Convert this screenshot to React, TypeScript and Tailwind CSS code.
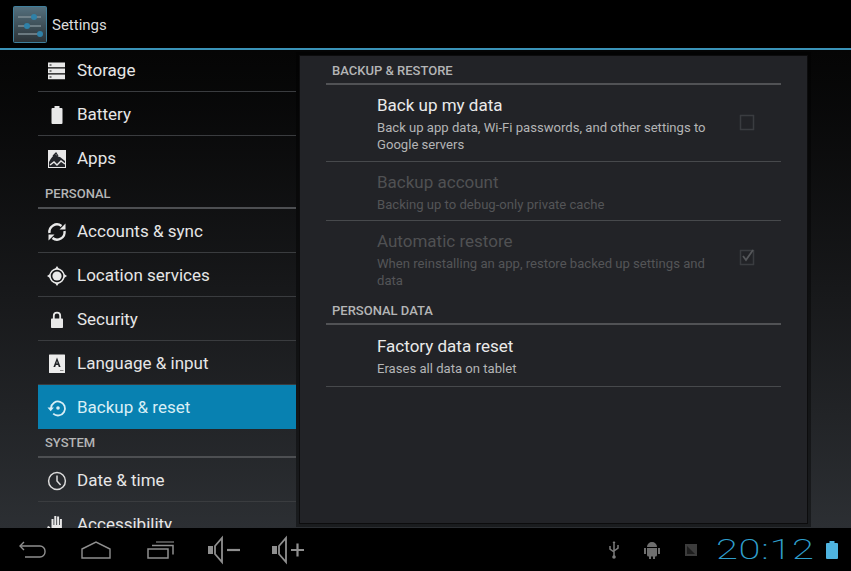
import type { ReactNode } from "react";

const icon = "h-[22px] w-[22px] shrink-0 text-[#e8e8e8]";

const StorageIcon = () => (
  <svg viewBox="0 0 22 22" className={icon} fill="currentColor">
    <path fillRule="evenodd" d="M2 2.500h17v4.800H2zM3.500 4.400v1h2v-1zM2 8.500h17v4.800H2zM3.500 10.400v1h2v-1zM2 14.500h17v4.800H2zM3.500 16.400v1h2v-1z" />
  </svg>
);
const BatteryIcon = () => (
  <svg viewBox="0 0 22 22" className={icon} fill="currentColor">
    <path d="M8.500 2h5v2h2a1 1 0 0 1 1 1v14a1 1 0 0 1-1 1h-9a1 1 0 0 1-1-1V5a1 1 0 0 1 1-1h2z" />
  </svg>
);
const AppsIcon = () => (
  <svg viewBox="0 0 22 22" className={icon}>
    <rect x="2" y="2" width="18" height="18" fill="#e8e8e8" />
    <path d="M3 14c2-4 4-6 6-8 2 1 3 3 5 3l5 4v6H3z" fill="#23252a" />
    <path d="M4 17l4-3 3 3 4-4 4 3" stroke="#e8e8e8" strokeWidth="1.400" fill="none" />
    <path d="M7 8l3-3 2 3" stroke="#23252a" strokeWidth="1.200" fill="none" />
  </svg>
);
const SyncIcon = () => (
  <svg viewBox="0 0 22 22" className={icon} fill="none" stroke="currentColor" strokeWidth="2.400">
    <path d="M3.500 12A7.500 7.500 0 0 1 15.500 5" />
    <path d="M18.500 10A7.500 7.500 0 0 1 6.500 17" />
    <path d="M19.500 2.500v6h-6zM2.500 19.500v-6h6z" fill="currentColor" stroke="none" />
  </svg>
);
const LocationIcon = () => (
  <svg viewBox="0 0 22 22" className={icon} fill="none" stroke="currentColor">
    <circle cx="11" cy="11" r="4.600" fill="currentColor" stroke="none" />
    <circle cx="11" cy="11" r="7" strokeWidth="1.500" />
    <path d="M11 1l2 3h-4zM11 21l2-3h-4zM1 11l3-2v4zM21 11l-3-2v4z" fill="currentColor" stroke="none" />
  </svg>
);
const LockIcon = () => (
  <svg viewBox="0 0 22 22" className={icon} fill="currentColor">
    <path d="M7.800 10V6.800a3.200 3.200 0 0 1 6.400 0V10" fill="none" stroke="currentColor" strokeWidth="1.800" />
    <rect x="5" y="9.500" width="12" height="9.500" rx=".8" />
  </svg>
);
const LanguageIcon = () => (
  <svg viewBox="0 0 22 22" className={icon}>
    <rect x="3" y="1.500" width="16" height="18.500" rx=".5" fill="#ececec" />
    <path d="M11 4.500l-3.600 9.500h1.800l.7-2h2.200l.7 2h1.800L11 4.500zm-.6 6L11 8.100l.6 2.400z" fill="#1f2125" fillRule="evenodd" />
    <path d="M14 17.500h3.500" stroke="#8a8a8a" strokeWidth="1" />
  </svg>
);
const HistoryIcon = () => (
  <svg viewBox="0 0 22 22" className={icon} fill="none" stroke="#d8eef5" strokeWidth="1.800">
    <path d="M5 11a7 7 0 1 1 2.200 5.600" />
    <path d="M1.500 10.500h6.400L4.700 14.200z" fill="#d8eef5" stroke="none" />
    <circle cx="12" cy="11" r="1.800" fill="#d8eef5" stroke="none" />
  </svg>
);
const ClockIcon = () => (
  <svg viewBox="0 0 22 22" className={icon} fill="none" stroke="#dcdcdc" strokeWidth="1.500">
    <circle cx="11" cy="11" r="8.400" />
    <path d="M11 5.500V11l3.600 4" />
  </svg>
);
const HandIcon = () => (
  <svg viewBox="0 0 22 22" className={icon} fill="currentColor">
    <path d="M6 21l-5-8 1.800-1L5.500 15V5h2v6h.8V2h2v9h.8V2.500h2V11h.8V5h2v11l3-2 1 1.500L15 21z" />
  </svg>
);

type Row =
  | { kind: "head"; label: string }
  | { kind: "item"; label: string; icon: ReactNode; active?: boolean; last?: boolean };

const rows: Row[] = [
  { kind: "item", label: "Storage", icon: <StorageIcon /> },
  { kind: "item", label: "Battery", icon: <BatteryIcon /> },
  { kind: "item", label: "Apps", icon: <AppsIcon />, last: true },
  { kind: "head", label: "PERSONAL" },
  { kind: "item", label: "Accounts & sync", icon: <SyncIcon /> },
  { kind: "item", label: "Location services", icon: <LocationIcon /> },
  { kind: "item", label: "Security", icon: <LockIcon /> },
  { kind: "item", label: "Language & input", icon: <LanguageIcon /> },
  { kind: "item", label: "Backup & reset", icon: <HistoryIcon />, active: true, last: true },
  { kind: "head", label: "SYSTEM" },
  { kind: "item", label: "Date & time", icon: <ClockIcon /> },
  { kind: "item", label: "Accessibility", icon: <HandIcon /> },
];

function SidebarRow({ row }: { row: Row }) {
  if (row.kind === "head") {
    return (
      <div className="flex h-[29px] shrink-0 items-center border-b-2 border-[#4d4f52] pl-[7px] pt-[1px] text-[13px] font-medium text-[#b4b5b6]">
        {row.label}
      </div>
    );
  }
  return (
    <div
      className={
        "flex h-[44px] shrink-0 items-center gap-[9px] pl-[8px] pt-[2px] text-[17px] first:h-[42px] first:pt-0 " +
        (row.active
          ? "bg-[#0881b1] text-[#d8eef5]"
          : "text-[#e6e6e6] " + (row.last ? "" : "border-b border-[#3a3c3f]"))
      }
    >
      {row.icon}
      <span>{row.label}</span>
    </div>
  );
}

function SectionHead({ label }: { label: string }) {
  return (
    <div className="flex h-[28px] items-center border-b-2 border-[#515255] pl-[6px] pt-[1px] text-[13px] font-medium text-[#b4b5b6]">
      {label}
    </div>
  );
}

function Pref({
  title,
  desc,
  disabled,
  check,
  height,
  noBorder,
}: {
  title: string;
  desc: ReactNode;
  disabled?: boolean;
  check?: "empty" | "checked";
  height: string;
  noBorder?: boolean;
}) {
  return (
    <div className={"flex items-center pl-[51px] " + height + (noBorder ? "" : " border-b border-[#47494c]")}>
      <div className="w-[340px]">
        <div className={"text-[17px] leading-[24px] " + (disabled ? "text-[#505153]" : "text-[#eaeaea]")}>{title}</div>
        <div className={"mt-[2px] text-[13.100px] leading-[17px] " + (disabled ? "text-[#545557]" : "text-[#b4b5b6]")}>{desc}</div>
      </div>
      {check && (
        <svg
          viewBox="0 0 18 18"
          className={"ml-[21px] h-[18px] w-[18px] shrink-0 " + (check === "checked" ? "mb-[5px]" : "mb-[3px]")}
          fill="none"
        >
          <rect x="2.500" y="2.500" width="13" height="14" stroke="#3a3c40" strokeWidth="1.500" />
          {check === "checked" && <path d="M5 8l3 4 7-10" stroke="#55575a" strokeWidth="1.800" />}
        </svg>
      )}
    </div>
  );
}

function NavIcons() {
  return (
    <div className="flex items-center pl-[17px]">
      <svg viewBox="0 0 30 18" className="h-[18px] w-[30px]" fill="none" stroke="#8f8f8f" strokeWidth="1.400">
        <path d="M3 5h20a5 5 0 0 1 5 5v1a5 5 0 0 1-5 5H8" />
        <path d="M7 1L3 5l4 4" />
      </svg>
      <svg viewBox="0 0 30 20" className="ml-[34px] h-[20px] w-[30px]" fill="none" stroke="#8f8f8f" strokeWidth="1.400">
        <path d="M1 9L15 2l14 7v9H1z" />
      </svg>
      <svg viewBox="0 0 30 20" className="ml-[35px] h-[20px] w-[30px]" fill="none" stroke="#8f8f8f" strokeWidth="1.500">
        <path d="M2 9h20v9H2z" />
        <path d="M6 5.500h21v9" />
        <path d="M10 2h18" strokeWidth="1.100" />
      </svg>
      <svg viewBox="0 0 36 30" className="ml-[30px] h-[30px] w-[36px]" fill="none" stroke="#8f8f8f">
        <path d="M2 11h5v8H2z" fill="#8f8f8f" stroke="none" />
        <path d="M9 11l7-8v24l-7-8z" strokeWidth="1.800" />
        <path d="M21 15h13" strokeWidth="2.200" />
      </svg>
      <svg viewBox="0 0 36 30" className="ml-[28px] h-[30px] w-[36px]" fill="none" stroke="#8f8f8f">
        <path d="M2 11h5v8H2z" fill="#8f8f8f" stroke="none" />
        <path d="M9 11l7-8v24l-7-8z" strokeWidth="1.800" />
        <path d="M21 15h13M27.500 8.500v13" strokeWidth="2.200" />
      </svg>
    </div>
  );
}

function StatusArea() {
  return (
    <div className="flex items-center pr-[13px]">
      <svg viewBox="0 0 14 20" className="h-[20px] w-[14px]" fill="none" stroke="#7c7c7c" strokeWidth="1.500">
        <path d="M7 2v15M3 6v3l4 3M11 5v3l-4 3" />
        <circle cx="7" cy="17" r="1.800" fill="#7c7c7c" stroke="none" />
        <path d="M5.500 3L7 1l1.500 2z" fill="#7c7c7c" stroke="none" />
      </svg>
      <svg viewBox="0 0 20 20" className="ml-[21px] h-[20px] w-[20px]" fill="#6e6e6e">
        <path d="M5 7a5 5 0 0 1 10 0zM5 8h10v7a1.500 1.500 0 0 1-1.500 1.500H13V19h-2v-2.500H9V19H7v-2.500h-.5A1.500 1.500 0 0 1 5 15zM2 8h2v6H2zM16 8h2v6h-2z" />
      </svg>
      <svg viewBox="0 0 12 12" className="ml-[23px] h-[12px] w-[12px]">
        <rect width="12" height="12" fill="#3c3c3c" />
        <path d="M2 2l8 8H2z" fill="#1d1d1d" />
      </svg>
      <span className="ml-[19px] w-[99px] origin-left scale-x-[1.42] text-[28px] leading-none font-[200] tracking-[0.5px] text-[#2f9fcc]">
        20:12
      </span>
      <svg viewBox="0 0 12 18" className="ml-[11px] h-[18px] w-[12px]" fill="#4fb4e0">
        <path d="M3.500 0h5v2H11a1 1 0 0 1 1 1v14a1 1 0 0 1-1 1H1a1 1 0 0 1-1-1V3a1 1 0 0 1 1-1h2.500z" />
      </svg>
    </div>
  );
}

export default function App() {
  return (
    <div className="flex h-[571px] w-[851px] flex-col overflow-hidden bg-black font-['Roboto',sans-serif]">
      <header className="flex h-[50px] shrink-0 items-center border-b-2 border-[#3a93b8] bg-black pl-[13px]">
        <svg viewBox="0 0 34 37" className="h-[37px] w-[34px]">
          <defs>
            <linearGradient id="tile" x1="0" y1="0" x2="0" y2="1">
              <stop offset="0" stopColor="#54707e" />
              <stop offset="1" stopColor="#2b3236" />
            </linearGradient>
          </defs>
          <rect x=".5" y=".5" width="33" height="36" rx="1" fill="url(#tile)" stroke="#3f7f9c" />
          <path d="M5 11h23M5 20h23M5 28h23" stroke="#7d8d94" strokeWidth="1.500" />
          <circle cx="21" cy="11" r="3" fill="#2f81a8" />
          <circle cx="14" cy="20" r="3" fill="#2f81a8" />
          <circle cx="27" cy="28" r="3" fill="#2f81a8" />
        </svg>
        <span className="ml-[5px] pt-[3px] text-[15px] text-[#dcdcdc]">Settings</span>
      </header>

      <main className="flex min-h-0 flex-1 bg-gradient-to-b from-[#050505] via-[#17181a] to-[#2c2f33]">
        <nav className="ml-[38px] flex h-full w-[258px] shrink-0 flex-col overflow-hidden">
          {rows.map((row) => (
            <SidebarRow key={row.label} row={row} />
          ))}
        </nav>

        <section className="mb-[4px] ml-[3px] mt-[5px] w-[509px] shrink-0 border border-[#0c0c0d] bg-[#222327] pl-[26px] pr-[26px] pt-[1px] shadow-[0_0_0_3px_rgba(0,0,0,0.4)]">
          <SectionHead label="BACKUP & RESTORE" />
          <Pref
            height="h-[77px]"
            title="Back up my data"
            desc={<>Back up app data, Wi-Fi passwords, and other settings to Google servers</>}
            check="empty"
          />
          <Pref height="h-[59px]" title="Backup account" desc="Backing up to debug-only private cache" disabled />
          <Pref
            height="h-[76px]"
            title="Automatic restore"
            desc="When reinstalling an app, restore backed up settings and data"
            disabled
            check="checked"
            noBorder
          />
          <SectionHead label="PERSONAL DATA" />
          <Pref height="h-[62px]" title="Factory data reset" desc="Erases all data on tablet" />
        </section>
      </main>

      <footer className="flex h-[43px] shrink-0 items-center justify-between bg-black">
        <NavIcons />
        <StatusArea />
      </footer>
    </div>
  );
}
